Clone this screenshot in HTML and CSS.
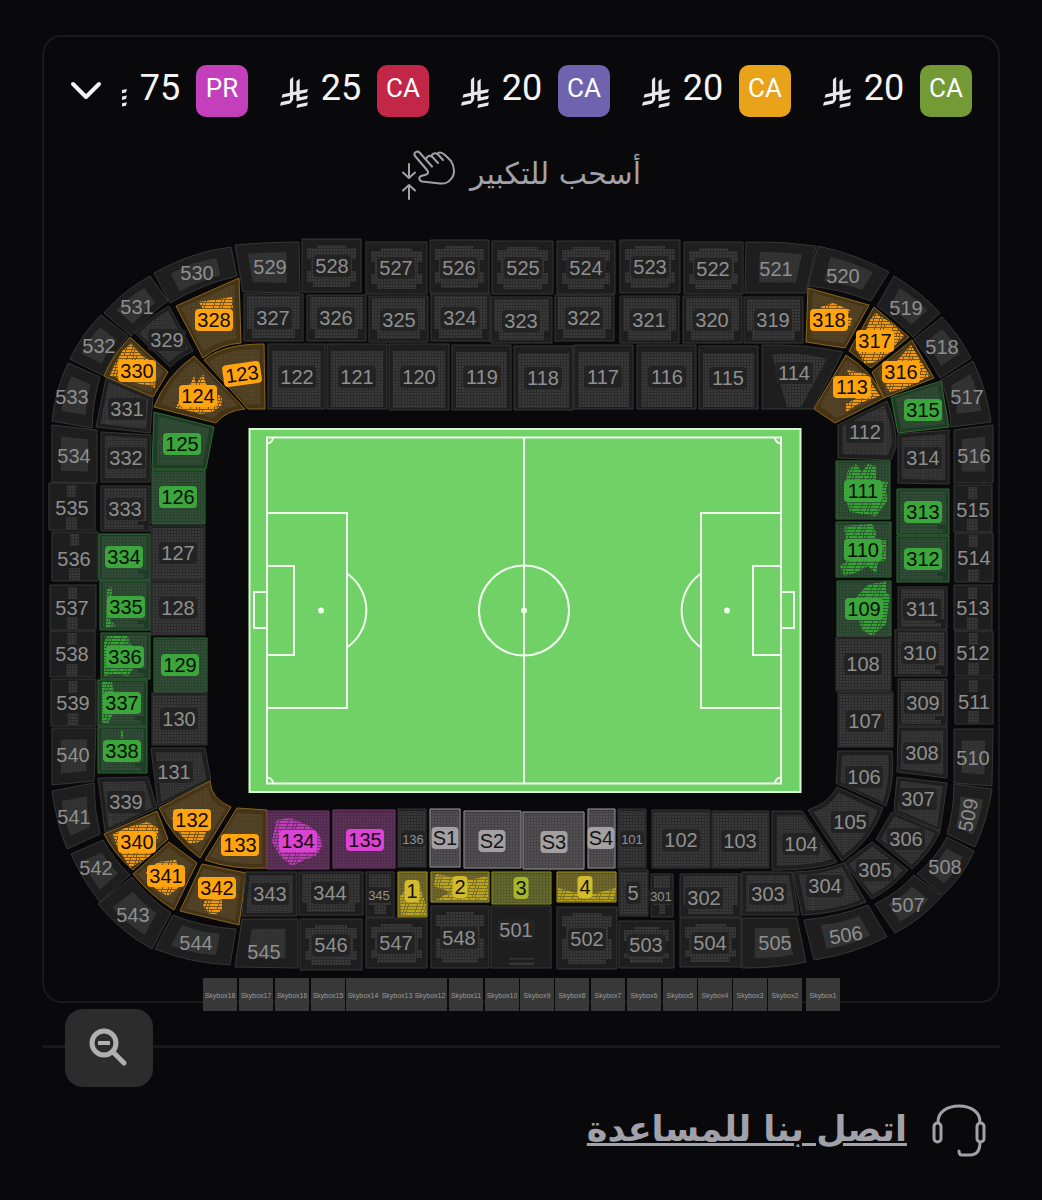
FILE: index.html
```html
<!DOCTYPE html>
<html lang="ar" dir="rtl">
<head>
    <meta charset="UTF-8">
    <meta name="viewport" content="width=device-width, initial-scale=1.0">
    <title>خريطة الملعب</title>
    <link rel="stylesheet" href="styles.css">
</head>
<body>
    <svg class="sprite" aria-hidden="true">
        <symbol id="riyal" viewBox="0 0 1124 1257">
            <path d="M699.62 1113.02c-20.06 44.48-33.32 92.75-38.4 143.37l424.51-90.24c20.06-44.47 33.31-92.75 38.4-143.37l-424.51 90.24Z"/>
            <path d="M1085.73 895.8c20.06-44.47 33.32-92.75 38.4-143.37l-330.68 70.33v-135.2l292.27-62.11c20.06-44.47 33.32-92.75 38.4-143.37l-330.68 70.27V66.13c-50.67 28.45-95.67 66.32-132.25 110.99v403.35l-132.25 28.11V0c-50.67 28.44-95.67 66.32-132.25 110.99v525.69l-295.91 62.88c-20.06 44.47-33.33 92.75-38.42 143.37l334.33-71.05v170.26l-358.3 76.14c-20.06 44.47-33.32 92.75-38.4 143.37l375.04-79.7c30.53-6.35 56.77-24.4 73.83-49.24l68.78-101.97c7.14-10.55 11.3-23.27 11.3-36.97v-149.98l132.25-28.11v270.4l424.53-90.28Z"/>
        </symbol>
    </svg>

    <main>
        <section class="card">
            <div class="legend">
                <ul class="prices">
                    <li class="price">
                        <span class="badge badge-green">CA</span>
                        <span class="amount">20</span>
                        <svg class="riyal"><use href="#riyal"/></svg>
                    </li>
                    <li class="price">
                        <span class="badge badge-orange">CA</span>
                        <span class="amount">20</span>
                        <svg class="riyal"><use href="#riyal"/></svg>
                    </li>
                    <li class="price">
                        <span class="badge badge-violet">CA</span>
                        <span class="amount">20</span>
                        <svg class="riyal"><use href="#riyal"/></svg>
                    </li>
                    <li class="price">
                        <span class="badge badge-red">CA</span>
                        <span class="amount">25</span>
                        <svg class="riyal"><use href="#riyal"/></svg>
                    </li>
                    <li class="price">
                        <span class="badge badge-pink">PR</span>
                        <span class="amount">75</span>
                        <svg class="riyal"><use href="#riyal"/></svg>
                    </li>
                </ul>
                <button class="more" type="button" aria-label="عرض المزيد">
                    <svg viewBox="0 0 32 20"><path d="M3 3l13 13L29 3"/></svg>
                </button>
            </div>

            <div class="hint">
                <span>أسحب للتكبير</span>
                <svg class="hint-icon" viewBox="0 0 56 50" aria-hidden="true">
                    <path d="M26 20L14 6C12 3 16 0 18.5 2.5L31 16.5M25 9.5C26 5.5 29 5 31.5 7L37 13M30 6.5C32 2.5 35 2.5 37.5 5L42 10M36 4C38 1.5 41.5 2.5 44 5L50 11C54 17 54 25 50 29C47 33 43 34 39 33.5L21 31.5C17 30 18 27 20 26C25 25 29 24 26 20"/>
                    <path d="M8 14v14M2 22.5L8 28l6-5.5M8 49V35M2 40.5L8 35l6 5.5"/>
                </svg>
            </div>

            <svg class="map" id="map" viewBox="44 230 954 771" direction="ltr">
                <defs>
                    <pattern id="seats" width="3" height="3" patternUnits="userSpaceOnUse">
                        <rect class="seat-base" width="3" height="3"/>
                        <rect class="seat-dot" width="2" height="2"/>
                    </pattern>
                </defs>
                <g id="sections"></g>

                <g class="pitch">
                    <rect class="grass" x="249.5" y="429" width="551" height="363"/>
                    <g class="lines">
                        <rect x="267" y="437.5" width="514" height="346"/>
                        <path d="M524 437.5v346"/>
                        <circle cx="524" cy="610.5" r="45"/>
                        <path d="M267 513h80v195h-80M267 566h27v89h-27M267 592h-13v36h13"/>
                        <path d="M781 513h-80v195h80M781 566h-28v89h28M781 592h13v36h-13"/>
                        <path d="M347 573.5a45 45 0 0 1 0 74M701 573.5a45 45 0 0 0 0 74"/>
                        <path d="M273 437.5a6 6 0 0 1-6 6M775 437.5a6 6 0 0 0 6 6M267 777.5a6 6 0 0 1 6 6M781 777.5a6 6 0 0 0-6 6"/>
                    </g>
                    <circle class="spot" cx="321" cy="610.5" r="3"/>
                    <circle class="spot" cx="524" cy="610.5" r="3"/>
                    <circle class="spot" cx="727" cy="610.5" r="3"/>
                </g>

                <g id="skyboxes"></g>
            </svg>
        </section>

        <div class="divider">
            <button class="zoom-out" type="button" aria-label="تصغير">
                <svg viewBox="0 0 40 40"><circle cx="15" cy="15" r="12"/><path d="M24 24l11 11"/><path class="minus" d="M9 15h12"/></svg>
            </button>
        </div>
    </main>

    <footer class="help">
        <svg class="headset" viewBox="0 0 54 54" aria-hidden="true">
            <path d="M6 18C6 8 15 2 27 2s21 6 21 16"/>
            <rect x="2" y="19" width="7" height="19" rx="3.5"/>
            <rect x="45" y="19" width="7" height="19" rx="3.5"/>
            <path d="M48 38c0 8-3 13-10 13h-8q-3 0-3-4"/>
        </svg>
        <a class="help-link" href="#help">اتصل بنا للمساعدة</a>
    </footer>

    <script src="script.js"></script>
</body>
</html>
```

FILE: styles.css
```css
* {
    margin: 0;
    padding: 0;
    box-sizing: border-box;
}

body {
    background: #09090b;
    color: #f4f4f5;
    font-family: Roboto, "DejaVu Sans", sans-serif;
    padding: 35px 42px;
}

button {
    border: none;
    background: none;
    cursor: pointer;
}

.sprite {
    display: none;
}

.card {
    border: 2px solid #1a1a1d;
    border-radius: 20px;
}

/* Price legend */
.legend {
    display: flex;
    align-items: center;
    gap: 20px;
    padding: 28px 26px 0;
}

.prices {
    flex: 1;
    min-width: 0;
    display: flex;
    gap: 32px;
    overflow: hidden;
    list-style: none;
}

.price {
    flex: none;
    display: flex;
    align-items: center;
}

.badge {
    width: 52px;
    height: 52px;
    border-radius: 10px;
    padding-bottom: 6px;
    display: flex;
    align-items: center;
    justify-content: center;
    font-size: 26px;
    color: #fff;
}

.badge-green { background: #739a35; }
.badge-orange { background: #e8a31b; }
.badge-violet { background: #6f63b0; }
.badge-red { background: #c32748; }
.badge-pink { background: #c33fbb; }

.amount {
    width: 42px;
    margin: 0 15px 0 12px;
    padding-bottom: 6px;
    font-size: 36px;
    line-height: 44px;
    text-align: center;
}

.riyal {
    width: 28px;
    height: 34px;
    padding-top: 3px;
    fill: #e8e8ea;
}

.more {
    width: 32px;
    height: 20px;
}

.more svg {
    display: block;
    fill: none;
    stroke: #f4f4f5;
    stroke-width: 4;
    stroke-linecap: round;
    stroke-linejoin: round;
}

.hint {
    display: flex;
    align-items: center;
    justify-content: center;
    gap: 13px;
    height: 50px;
    margin: 33px 0 30px;
    color: #a1a1aa;
    font-family: "DejaVu Sans", sans-serif;
    font-size: 30px;
    line-height: 40px;
}

.hint span {
    padding-bottom: 2px;
}

.hint-icon {
    width: 56px;
    height: 50px;
    fill: none;
    stroke: #a1a1aa;
    stroke-width: 2;
    stroke-linecap: round;
    stroke-linejoin: round;
}

/* Stadium map */
.map {
    display: block;
    width: 100%;
    overflow: visible;
    font-family: "Liberation Sans", Arial, sans-serif;
}

.seat-base { fill: rgba(255, 255, 255, 0.06); }
.seat-dot { fill: rgba(255, 255, 255, 0.07); }

.section {
    --fill: #1e1e1e;
    --line: #363636;
    --chip: #232323;
    --text: #8f8f8f;
    --seat: none;
}

.orange { --fill: #453416; --line: #8a651c; --chip: #ffa40f; --text: #120c00; --seat: #f0990f; }
.green { --fill: #203c25; --line: #2f6a34; --chip: #3ca53b; --text: #061206; --seat: #34a035; }
.pink { --fill: #4b2148; --line: #763b73; --chip: #db43d3; --text: #160415; --seat: #c03bba; }
.grey { --fill: #393739; --line: #a19da1; --chip: #a49fa1; --text: #151515; --seat: #b5b0b2; }
.yellow { --fill: #5a5215; --line: #a99a24; --chip: #d2bb2c; --text: #141203; --seat: #b9a41f; }
.lime { --fill: #4d5217; --line: #8c9125; --chip: #a8b52c; --text: #101303; --seat: #8f9a25; }

.area {
    fill: var(--fill);
    stroke: var(--line);
    stroke-width: 1;
}

.seats {
    fill: url(#seats);
}

.orange .seats, .green .seats, .pink .seats {
    opacity: 0.7;
}

.free-base {
    fill: var(--seat);
    opacity: 0.25;
}

.free {
    fill: none;
    stroke: var(--seat);
    stroke-width: 2;
}

.chip {
    fill: var(--chip);
}

.label {
    fill: var(--text);
    font-size: 20px;
    text-anchor: middle;
}

.label-small {
    font-size: 13px;
}

.skybox {
    fill: #383838;
}

.skybox-label {
    fill: #9a9a9a;
    font-size: 7px;
    text-anchor: middle;
}

.grass {
    fill: #70d167;
    stroke: #d9f7d5;
    stroke-width: 2;
}

.lines {
    fill: none;
    stroke: #f2fdf0;
    stroke-width: 2;
}

.spot {
    fill: #f2fdf0;
}

/* Divider with the zoom button over it */
.divider {
    position: relative;
    margin-top: 42px;
    border-top: 3px solid #18181b;
}

.zoom-out {
    position: absolute;
    top: -39px;
    left: 23px;
    width: 88px;
    height: 78px;
    border-radius: 18px;
    background: #2c2c2d;
    display: flex;
    align-items: center;
    justify-content: center;
}

.zoom-out svg {
    width: 40px;
    height: 40px;
    fill: none;
    stroke: #b0b0b0;
    stroke-width: 5;
    stroke-linecap: round;
}

.zoom-out .minus {
    stroke-width: 4;
    stroke-linecap: butt;
}

/* Help */
.help {
    display: flex;
    align-items: center;
    gap: 25px;
    margin-top: 56px;
    padding: 0 14px;
}

.headset {
    width: 54px;
    height: 54px;
    fill: none;
    stroke: #a1a1aa;
    stroke-width: 3;
    stroke-linecap: round;
}

.help-link {
    padding-bottom: 4px;
    color: #a1a1aa;
    font-family: "DejaVu Sans", sans-serif;
    font-size: 35px;
    font-weight: bold;
    line-height: 50px;
    text-decoration-thickness: 3px;
}
```

FILE: script.js
```js
const NS = 'http://www.w3.org/2000/svg';

// Straight stands: label, left, top, right, bottom, label x, label y, colour
const blocks = [
    ['528', 302, 239, 361, 292, 332, 266], ['527', 366, 242, 427, 294, 396, 268],
    ['526', 430, 240, 489, 293, 459, 268], ['525', 492, 241, 553, 294, 523, 268],
    ['524', 557, 241, 615, 294, 586, 268], ['523', 620, 240, 680, 293, 650, 267],
    ['522', 684, 242, 743, 294, 713, 269],
    ['327', 244, 294, 303, 341, 273, 318], ['326', 307, 295, 366, 341, 336, 318],
    ['325', 369, 296, 428, 342, 399, 320], ['324', 431, 294, 490, 341, 460, 318],
    ['323', 491, 297, 552, 343, 521, 321], ['322', 555, 295, 614, 341, 584, 318],
    ['321', 620, 296, 679, 343, 649, 320], ['320', 683, 296, 742, 343, 712, 320],
    ['319', 744, 297, 803, 343, 773, 320],
    ['122', 268, 344, 325, 409, 297, 377], ['121', 327, 344, 387, 409, 357, 377],
    ['120', 389, 344, 449, 410, 419, 377], ['119', 452, 345, 511, 410, 482, 377],
    ['118', 514, 346, 573, 410, 543, 378], ['117', 574, 345, 633, 409, 603, 377],
    ['116', 637, 345, 696, 409, 667, 377], ['115', 699, 346, 758, 409, 728, 378],

    ['535', 49, 483, 95, 530, 72, 508], ['536', 52, 532, 98, 581, 74, 559],
    ['537', 50, 585, 96, 630, 72, 608], ['538', 50, 631, 95, 677, 72, 654],
    ['539', 51, 679, 96, 726, 73, 703],
    ['333', 101, 486, 150, 531, 125, 509], ['334', 99, 534, 150, 580, 124, 557, 'green'],
    ['335', 100, 581, 150, 630, 126, 607, 'green'], ['336', 101, 633, 150, 679, 125, 657, 'green'],
    ['337', 98, 680, 147, 726, 122, 703, 'green'], ['338', 98, 727, 147, 773, 122, 751, 'green'],
    ['126', 152, 470, 205, 524, 178, 497, 'green'], ['127', 151, 526, 205, 580, 178, 553],
    ['128', 151, 581, 205, 635, 178, 608], ['129', 154, 638, 207, 692, 180, 665, 'green'],
    ['130', 152, 693, 207, 745, 179, 719],

    ['515', 954, 485, 992, 532, 973, 510], ['514', 955, 533, 993, 582, 974, 558],
    ['513', 954, 585, 992, 630, 973, 608], ['512', 955, 631, 993, 676, 973, 653],
    ['511', 955, 678, 993, 724, 974, 702],
    ['313', 897, 489, 949, 535, 923, 512, 'green'], ['312', 897, 536, 949, 582, 923, 559, 'green'],
    ['311', 898, 587, 947, 629, 922, 609], ['310', 895, 630, 947, 676, 920, 653],
    ['309', 898, 679, 947, 726, 923, 703],
    ['111', 836, 461, 890, 519, 863, 491, 'green'], ['110', 836, 522, 891, 577, 863, 550, 'green'],
    ['109', 837, 581, 891, 636, 864, 609, 'green'], ['108', 836, 637, 891, 691, 863, 664],
    ['107', 838, 692, 893, 747, 865, 721],

    ['134', 267, 811, 329, 869, 298, 841, 'pink'], ['135', 333, 810, 395, 868, 365, 840, 'pink'],
    ['136', 398, 809, 426, 867, 413, 839], ['S1', 430, 809, 460, 867, 445, 838, 'grey'],
    ['S2', 464, 811, 521, 868, 492, 841, 'grey'], ['S3', 523, 812, 584, 869, 554, 842, 'grey'],
    ['S4', 588, 809, 615, 868, 601, 838, 'grey'], ['101', 618, 809, 646, 868, 632, 839],
    ['102', 652, 810, 710, 868, 681, 840], ['103', 712, 811, 769, 868, 740, 841],
    ['344', 299, 872, 363, 915, 330, 893], ['345', 366, 872, 394, 917, 379, 895],
    ['1', 398, 872, 427, 917, 412, 891, 'yellow'], ['2', 431, 872, 489, 902, 460, 887, 'yellow'],
    ['3', 492, 872, 551, 904, 521, 888, 'lime'], ['4', 557, 872, 616, 902, 585, 887, 'yellow'],
    ['5', 619, 870, 648, 916, 633, 893], ['301', 651, 874, 673, 917, 661, 896],
    ['302', 680, 874, 741, 917, 704, 898],
    ['546', 300, 919, 362, 970, 331, 945], ['547', 366, 918, 427, 968, 396, 943],
    ['548', 431, 906, 489, 968, 459, 938], ['501', 491, 906, 551, 968, 516, 930],
    ['502', 557, 907, 617, 969, 587, 939], ['503', 619, 921, 674, 968, 646, 945],
    ['504', 680, 918, 741, 967, 710, 943]
];

// Corner stands: label, outline, label x, label y, colour, label angle
const corners = [
    ['529', '235 245 Q266 242 299 242 L300 293 243 292', 270, 267],
    ['530', '154 273 Q191 252 231 247 L237 276 Q202 284 170 303', 197, 273],
    ['531', '150 276 168 301 Q147 316 131 336 L104 313 Q124 290 150 276', 137, 307],
    ['532', '101 315 128 336 Q112 355 104 376 L70 359 Q81 335 101 315', 99, 346],
    ['533', '68 363 100 377 Q93 401 92 428 L52 421 Q55 391 68 363', 72, 397],
    ['534', '52 425 97 430 97 483 52 482', 74, 456],
    ['328', '176 306 239 278 241 343 Q220 344 203 358', 214, 320, 'orange'],
    ['329', '169 306 193 351 Q180 357 170 367 L135 333 Q149 317 169 306', 167, 340],
    ['330', '130 337 168 372 153 397 104 376 Q113 355 130 337', 137, 371, 'orange'],
    ['331', '106 378 153 398 150 433 96 427', 127, 409],
    ['332', '101 432 151 435 150 482 101 482', 126, 458],
    ['123', '264 344 265 409 248 409 204 360 Q222 344 264 344', 242, 374, 'orange', -8],
    ['124', '194 356 245 409 Q227 410 216 423 L154 407 Q166 376 194 356', 198, 396, 'orange'],
    ['125', '154 412 214 427 206 469 152 469', 182, 444, 'green'],
    ['521', '746 242 Q782 241 816 246 L806 293 745 293', 776, 269],
    ['520', '818 246 Q856 254 889 272 L871 301 Q841 289 808 286', 843, 276],
    ['519', '894 276 Q921 292 940 313 L913 337 Q897 320 877 306', 906, 308],
    ['518', '942 317 Q959 335 971 358 L940 378 Q929 357 914 339', 942, 347],
    ['517', '973 361 Q987 390 991 422 L951 427 Q950 404 941 380', 967, 397],
    ['516', '954 430 993 425 993 483 954 483', 974, 456],
    ['114', '762 345 Q805 344 843 352 L813 409 762 409', 794, 373],
    ['318', '808 288 869 305 845 348 806 342', 829, 320, 'orange'],
    ['317', '874 307 909 337 871 368 849 351', 875, 341, 'orange'],
    ['316', '912 340 934 378 884 398 872 372', 901, 372, 'orange'],
    ['315', '941 381 949 427 898 433 891 397', 923, 410, 'green'],
    ['113', '846 355 Q871 370 884 398 L835 423 814 409', 852, 387, 'orange'],
    ['112', '838 425 887 401 Q897 425 896 447 L891 460 838 458', 865, 432],
    ['314', '898 434 949 430 949 484 898 483', 923, 458],
    ['540', '52 728 96 728 94 781 52 785', 73, 755],
    ['131', '151 748 205 748 211 780 158 806', 174, 772],
    ['339', '98 778 148 777 157 808 105 832', 126, 802],
    ['541', '94 783 Q94 809 100 834 L67 849 Q56 822 52 791', 74, 817],
    ['542', '103 840 Q114 860 130 875 L100 902 Q82 879 71 854', 96, 868],
    ['543', '132 877 Q148 898 171 913 L152 949 Q122 933 98 904', 133, 915],
    ['544', '173 915 Q202 927 236 929 L230 965 Q190 963 155 949', 196, 943],
    ['545', '242 919 298 919 298 968 235 967', 264, 952],
    ['132', '210 781 Q211 799 231 807 L200 858 Q172 838 159 808', 192, 820, 'orange'],
    ['133', '237 808 267 810 267 868 Q232 870 205 860', 240, 845, 'orange'],
    ['340', '157 811 168 839 133 870 Q114 854 104 834', 137, 842, 'orange'],
    ['341', '169 842 197 863 174 910 Q150 895 133 874', 166, 876, 'orange'],
    ['342', '202 864 246 873 239 925 180 911', 217, 888, 'orange'],
    ['343', '246 872 297 872 297 916 242 916', 270, 894],
    ['104', '772 811 802 811 837 862 Q818 870 772 870', 801, 844],
    ['105', '837 787 883 808 Q872 840 842 861 L808 810 Q829 803 837 787', 850, 822],
    ['106', '838 751 892 751 Q895 778 886 806 L836 783', 864, 777],
    ['308', '898 727 947 727 947 778 897 772', 922, 753],
    ['307', '897 777 947 783 940 831 894 811', 918, 799],
    ['306', '892 812 940 832 Q930 853 912 869 L876 839', 906, 839],
    ['305', '872 842 908 870 Q892 888 872 899 L844 863', 875, 870],
    ['304', '793 872 Q820 872 844 863 L866 902 Q835 914 802 915', 825, 886],
    ['303', '742 872 792 872 799 915 742 915', 768, 894],
    ['505', '742 918 797 918 806 962 Q780 968 742 968', 775, 943],
    ['506', '804 920 Q838 917 868 905 L887 937 Q853 954 814 960', 846, 935, '', -9],
    ['507', '914 875 942 896 Q921 920 895 933 L875 904 Q898 893 914 875', 908, 905],
    ['508', '947 837 974 851 Q964 875 943 895 L917 874 Q936 858 947 837', 945, 867],
    ['509', '954 784 992 789 Q988 818 975 847 L947 834 Q954 810 954 784', 968, 815, '', -78],
    ['510', '954 729 993 729 992 786 954 783', 973, 758]
];

// Areas where single free seats are shown, by section
const freeSeats = {
    328: '199 302 232 297 233 308 226 310 226 318 203 318 203 310',
    330: '123 350 131 344 142 356 153 362 156 372 155 388 149 385 140 384 128 380 110 376 114 366',
    124: '190 384 194 376 196 384 203 374 206 384 222 398 221 406 212 412 200 414 190 411 176 408 184 388',
    318: '821 307 833 303 850 310 847 316 852 318 850 326 840 322 822 312',
    317: '870 320 876 313 894 325 904 336 898 342 890 352 876 362 865 364 858 352',
    316: '896 362 911 345 930 376 905 388 890 392 886 386',
    113: '847 370 866 374 872 384 880 396 868 400 858 404 846 412 846 404 860 396',
    340: '113 834 125 828 148 822 158 828 158 838 152 846 150 856 130 868 117 846',
    341: '146 872 158 862 176 860 178 866 184 872 178 888 168 896 160 892 150 884',
    342: '205 900 222 898 222 910 216 914 210 914 203 906',
    132: '172 818 182 808 186 816 184 830 206 832 203 840 198 842 190 844 180 834',
    111: '848 470 856 464 862 472 868 464 876 466 876 480 888 482 886 490 888 500 882 508 876 516 850 512 846 500 846 480',
    110: '844 526 872 524 876 532 876 540 886 540 886 560 878 562 876 574 868 566 858 572 844 576 840 566 848 560 846 545',
    109: '856 598 862 590 870 584 886 582 886 592 890 596 886 624 872 636 862 630 858 618',
    335: '107 590 112 586 112 600 110 620 116 626 106 628',
    336: '104 642 108 636 128 636 130 644 138 650 134 668 128 676 116 674 104 676',
    337: '102 682 112 682 114 694 138 696 132 708 114 712 108 724 102 722',
    338: '121 731 123 731 123 738 121 738',
    134: '276 820 290 818 310 826 320 836 322 846 316 856 304 860 292 866 280 856 272 842',
    1: '400 896 408 888 418 880 426 906 426 916 401 916',
    2: '436 874 470 880 488 876 488 900 436 900 450 892 434 886',
    4: '558 888 572 892 592 894 616 888 614 901 558 901'
};

// Skybox18 first
const skyboxes = [203, 239, 275, 311, 346, 380, 413, 449, 485, 520, 555, 591, 627, 663, 698, 733, 768, 806];

function add(parent, name, attrs) {
    const el = document.createElementNS(NS, name);
    for (const key in attrs) el.setAttribute(key, attrs[key]);
    parent.appendChild(el);
    return el;
}

// Seat block shape inside a rectangular stand
function seatShape(label, l, t, r, b) {
    const row = label.length === 3 ? label[0] : '';
    if (row === '5') {
        if (r < 100 || l > 950) {
            const c = (l + r) / 2;
            return `M${c - 5} ${t + 2}h9v12h-9zM${c - 6} ${b - 13}h11v12h-11z`;
        }
        if (label === '501') return `M${l + 18} ${b - 10}h25v2h-25zM${l + 18} ${b - 6}h25v3h-25z`;
        return `M${l + 15} ${t + 6}H${r - 15}v3H${r - 5}V${t + 20}h-4V${t + 32}h4V${b - 10}H${r - 11}v5H${l + 11}v-5H${l + 5}V${t + 32}h4V${t + 20}h-4V${t + 9}h10z`;
    }
    if (row === '3' && (b < 350 || t > 800)) {
        return `M${l + 3} ${t + 2}H${r - 3}V${b - 12}h-5v9H${l + 8}v-9H${l + 3}z`;
    }
    if (row === '3') return `M${l + 3} ${t + 2}H${r - 3}V${b - 10}h-9v4h6v4H${l + 3}z`;
    if (b < 420) return `M${l + 4} ${t + 7}H${r - 4}V${b - 2}H${l + 4}z`;
    return `M${l + 1} ${t + 2}H${r - 1}V${b - 1}H${l + 1}z`;
}

function bounds(path) {
    const n = path.match(/-?\d+/g).map(Number);
    const xs = n.filter((v, i) => i % 2 === 0);
    const ys = n.filter((v, i) => i % 2 === 1);
    return [Math.min(...xs), Math.min(...ys), Math.max(...xs), Math.max(...ys)];
}

// Seats are drawn as short dashed rows, cut to the free area
function drawFree(g, label) {
    const shape = 'M' + freeSeats[label] + 'Z';
    const clip = add(g, 'clipPath', { id: 'clip-' + label });
    add(clip, 'path', { d: shape });
    add(g, 'path', { class: 'free-base', d: shape });
    const [l, t, r, b] = bounds(shape);
    let rows = '';
    for (let y = t, i = 0; y <= b; y += 3, i++) rows += `M${l - (i * 5) % 4} ${y + 1}H${r}`;
    add(g, 'path', { class: 'free', d: rows, 'clip-path': `url(#clip-${label})`, 'stroke-dasharray': '5 1 2 1 8 1' });
}

function drawSection(label, outline, seats, x, y, kind, angle) {
    const g = add(document.getElementById('sections'), 'g', { class: 'section ' + (kind || '') });
    add(g, 'path', { class: 'area', d: outline });
    add(g, 'path', { class: 'seats', ...seats });
    if (freeSeats[label]) drawFree(g, label);

    const small = ['136', '101', '345', '301'].includes(label);
    const w = small ? 24 : label.length * 11 + (label.length > 1 ? 5 : 4);
    const h = small ? 16 : 22;
    const tag = add(g, 'g', angle ? { transform: `rotate(${angle} ${x} ${y})` } : {});
    if (kind || /^[13]/.test(label) || x > 300 && x < 745) {
        add(tag, 'rect', { class: 'chip', x: x - w / 2, y: y - h / 2, width: w, height: h, rx: 4 });
    }
    const text = add(tag, 'text', { class: small ? 'label label-small' : 'label', x, y: y + (small ? 5 : 7) });
    text.textContent = label;
}

corners.forEach(([label, path, x, y, kind, angle]) => {
    const outline = 'M' + path + 'Z';
    const [l, t, r, b] = bounds(path);
    const cx = (l + r) / 2, cy = (t + b) / 2;
    const s = label[0] === '5' ? 0.6 : 0.85;
    drawSection(label, outline, {
        d: label === '114' ? 'M772 355 Q800 351 827 359 L801 407 787 407Z' : outline,
        transform: label === '114' ? '' : `translate(${cx * (1 - s)} ${cy * (1 - s)}) scale(${s})`
    }, x, y, kind, angle);
});

blocks.forEach(([label, l, t, r, b, x, y, kind]) => {
    drawSection(label, `M${l} ${t}H${r}V${b}H${l}Z`, { d: seatShape(label, l, t, r, b) }, x, y, kind);
});

skyboxes.forEach((x, i) => {
    const g = document.getElementById('skyboxes');
    add(g, 'rect', { class: 'skybox', x, y: 978, width: 34, height: 33 });
    add(g, 'text', { class: 'skybox-label', x: x + 17, y: 998 }).textContent = 'Skybox' + (18 - i);
});
```
